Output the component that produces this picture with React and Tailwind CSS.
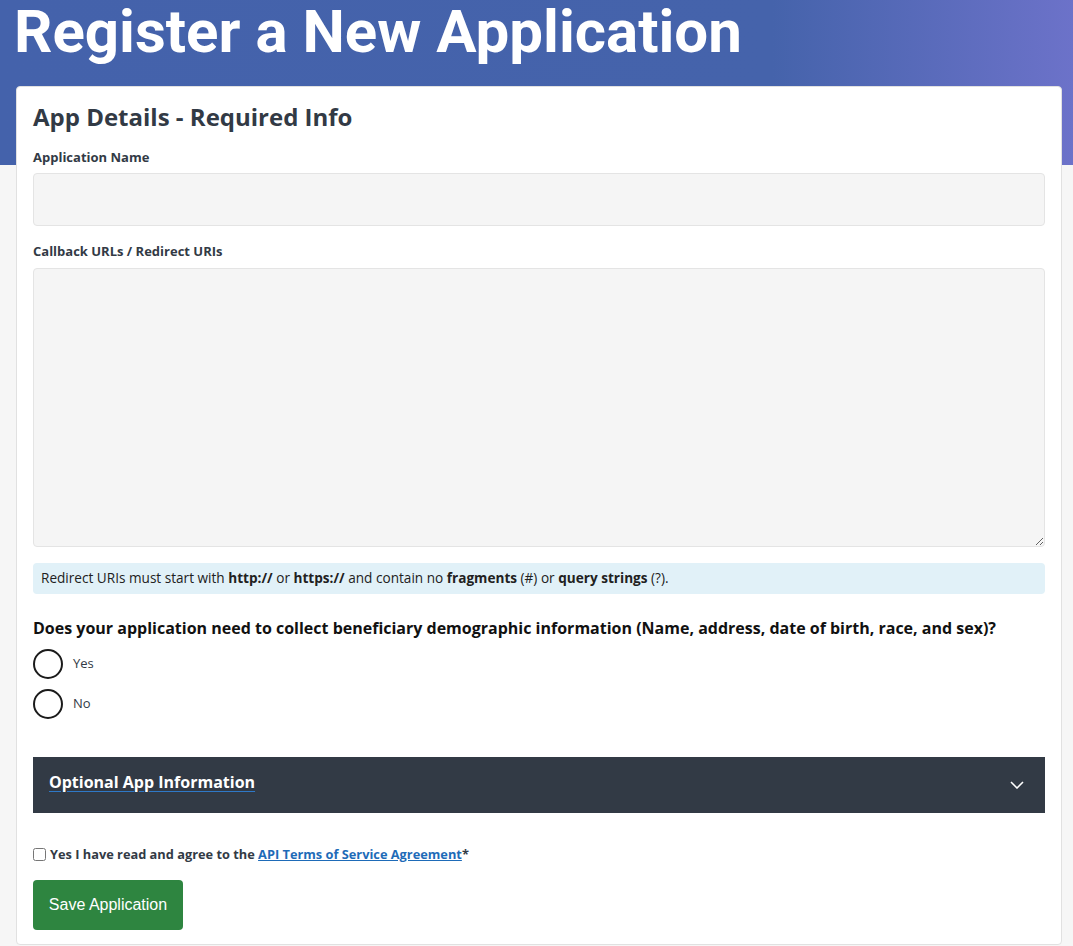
import { useState } from "react";

// page: register app form

export default function App() {
  const [demo, setDemo] = useState(null);
  const [agree, setAgree] = useState(false);
  const [open, setOpen] = useState(false);

  return (
    <div className="min-h-screen bg-[#f6f6f6] font-['Open_Sans',sans-serif] text-[#323a45]">
      {/* header band */}
      <div className="h-[165px] bg-[linear-gradient(to_right,#4462ab_0%,#4563ab_72%,#6c72c9_100%)]">
        <h1 className="pl-3.5 font-['Roboto',sans-serif] text-[60px] font-bold leading-[64px] text-white">
          Register a New Application
        </h1>
      </div>

      {/* card */}
      <div className="relative -mt-[79px] ml-4 w-[1046px] rounded border border-[#e1e1e1] bg-white px-4 pt-4 pb-[14px]">
        <h2 className="text-[24px] leading-[1.2] font-bold text-[#323a45]">App Details - Required Info</h2>

        <label className="mt-[15px] block text-[13px] leading-5 font-bold">Application Name</label>
        <input
          type="text"
          className="mt-1.5 block h-[53px] w-full rounded border border-[#e4e4e4] bg-[#f5f5f5] px-3 text-base outline-none"
        />

        <label className="mt-[15px] block text-[13px] leading-5 font-bold">Callback URLs / Redirect URIs</label>
        <textarea className="mt-[7px] block h-[279px] w-full rounded border border-[#e4e4e4] bg-[#f5f5f5] p-3 text-base outline-none" />

        <div className="mt-4 flex h-[31px] items-center rounded bg-[#e1f1f8] px-2 text-[13.6px] text-[#212121]">
          <span>
            Redirect URIs must start with <b>http://</b> or <b>https://</b> and contain no <b>fragments</b> (#) or{" "}
            <b>query strings</b> (?).
          </span>
        </div>

        <p className="mt-[22px] text-base leading-6 font-bold text-[#111]">
          Does your application need to collect beneficiary demographic information (Name, address, date of birth, race, and sex)?
        </p>

        <div className="mt-[9px] flex flex-col gap-2.5">
          {["Yes", "No"].map((v) => (
            <label key={v} className="flex cursor-pointer items-center gap-[10px]">
              <span
                onClick={() => setDemo(v)}
                className="flex h-[30px] w-[30px] items-center justify-center rounded-full border-2 border-[#1b1b1b] bg-white"
              >
                {demo === v && <span className="h-4 w-4 rounded-full bg-[#1b1b1b]" />}
              </span>
              <span className="text-[13px] text-[#323a45]">{v}</span>
            </label>
          ))}
        </div>

        {/* accordion */}
        <button
          onClick={() => setOpen(!open)}
          className="mt-[38px] flex h-[56px] w-full items-center justify-between bg-[#323a45] pr-[21px] pl-4 text-left"
        >
          <span className="mb-[5px] text-base font-bold text-white underline decoration-[#2e78c7] underline-offset-[3px]">
            Optional App Information
          </span>
          <svg width="14" height="8" viewBox="0 0 14 8" fill="none" className={open ? "rotate-180" : ""}>
            <path d="M1 1l6 6 6-6" stroke="white" strokeWidth="1.6" />
          </svg>
        </button>

        <div className="mt-[32px] flex items-center">
          <input
            type="checkbox"
            checked={agree}
            onChange={() => setAgree(!agree)}
            className="m-0 h-[13px] w-[13px]"
          />
          <span className="ml-1 text-[12.8px] font-bold text-[#323a45]">
            Yes I have read and agree to the{" "}
            <a href="#" className="text-[#1e6bb8] underline">
              API Terms of Service Agreement
            </a>
            *
          </span>
        </div>

        <button className="mt-[16px] h-[50px] w-[150px] rounded bg-[#2e8540] font-['Liberation_Sans',Arial,sans-serif] text-base text-white">
          Save Application
        </button>
      </div>
    </div>
  );
}
